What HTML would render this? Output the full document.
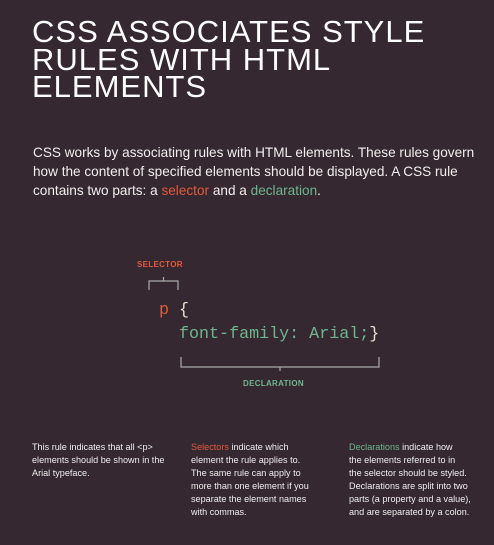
<!DOCTYPE html>
<html><head><style>
body{margin:0;width:494px;height:545px;background:#352830;color:#fff;font-family:"Liberation Sans",sans-serif;position:relative;overflow:hidden}
.a{position:absolute}
h1{position:absolute;left:32px;top:18px;margin:0;font-weight:normal;font-size:31px;line-height:27.5px;letter-spacing:1px;color:#fff;white-space:nowrap}
.p{left:33px;top:143px;font-size:13.6px;line-height:19px;width:460px;color:#f2eeee}
.or{color:#e05a3c}.gr{color:#6db58e}
.lab{font-size:8px;font-weight:bold;letter-spacing:.3px}
.code{font-family:"Liberation Mono",monospace;font-size:16.7px}
.s{font-size:9.1px;line-height:12.9px;top:441px;color:#eee;white-space:nowrap}
</style></head><body>
<h1>CSS ASSOCIATES STYLE<br>RULES WITH HTML<br>ELEMENTS</h1>
<div class="a p">CSS works by associating rules with HTML elements. These rules govern how the content of specified elements should be displayed. A CSS rule contains two parts: a <span class="or">selector</span> and a <span class="gr">declaration</span>.</div>
<div class="a lab or" style="left:137px;top:260px">SELECTOR</div>
<svg class="a" style="left:0;top:0" width="494" height="545"><g fill="none" stroke="#aaa" stroke-width="1.2">
<path d="M149 290V281H178V290M163.5 281V277"/>
<path d="M181 357V367H379V357M280 367V371"/></g></svg>
<div class="a code or" style="left:159px;top:301px">p <span style="color:#e8e0d0">{</span></div>
<div class="a code gr" style="left:179px;top:325px">font-family: Arial;<span style="color:#e8e0d0">}</span></div>
<div class="a lab gr" style="left:243px;top:379px">DECLARATION</div>
<div class="a s" style="left:32px">This rule indicates that all &lt;p&gt;<br>elements should be shown in the<br>Arial typeface.</div>
<div class="a s" style="left:191px"><span class="or">Selectors</span> indicate which<br>element the rule applies to.<br>The same rule can apply to<br>more than one element if you<br>separate the element names<br>with commas.</div>
<div class="a s" style="left:349px"><span class="gr">Declarations</span> indicate how<br>the elements referred to in<br>the selector should be styled.<br>Declarations are split into two<br>parts (a property and a value),<br>and are separated by a colon.</div>
</body></html>
